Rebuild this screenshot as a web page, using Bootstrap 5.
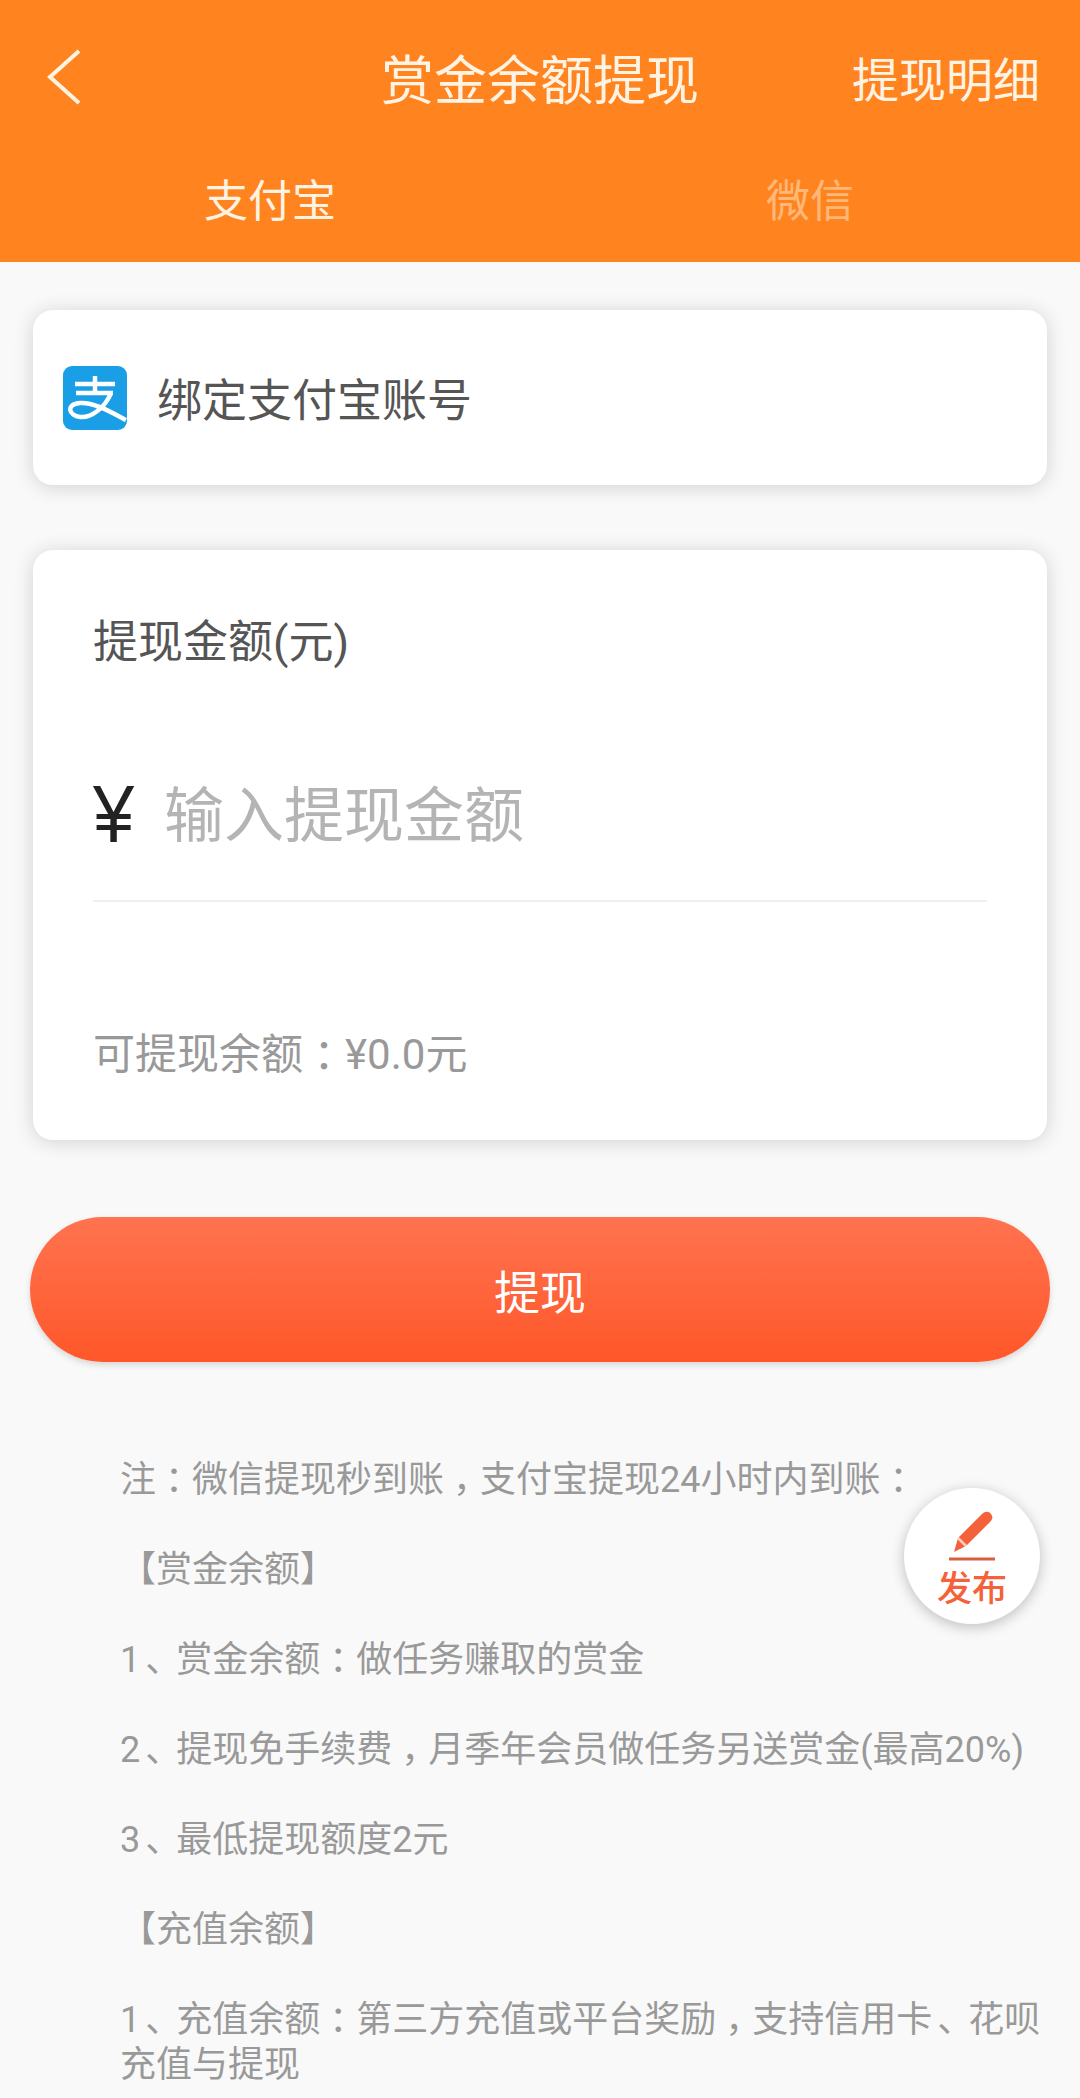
<!doctype html>
<html lang="zh"><head><meta charset="utf-8">
<link href="https://cdn.jsdelivr.net/npm/bootstrap@5.3.0/dist/css/bootstrap.min.css" rel="stylesheet">
<style>
html,body{height:2098px;overflow:hidden}
body{background:#f9f9f9;font-family:"Noto Sans CJK SC","Liberation Sans",sans-serif;position:relative;color:#555}
.top-bar{background:#ff8420;height:262px;color:#fff3e4}
.top-row{display:grid;grid-template-columns:1fr auto 1fr;align-items:center;height:80px;padding:37px 40px 0 40px;box-sizing:content-box}
.back-icon{display:block;margin-left:7px}
.page-title{font-size:53px;line-height:80px}
.top-link{font-size:47px;line-height:80px}
.tab-row{margin:0;padding-top:49px}
.tab-item{font-size:44px;line-height:64px;padding:0}
.tab-off{color:#ffb878}
.panel{margin:48px 33px 0;border:0;border-radius:20px;box-shadow:0 2px 20px rgba(0,0,0,.16);background:#fff}
.bind-panel{height:175px;flex-direction:row;align-items:center;padding-left:30px}
.bind-text{font-size:45px;margin-left:30px;color:#555}
.amount-panel{margin-top:65px;height:590px;padding:0 60px}
.amount-label{font-family:Roboto,"Noto Sans CJK SC",sans-serif;font-size:45px;line-height:60px;margin-top:63px;color:#555}
.amount-row{height:140px;margin-top:89px;border-bottom:2px solid #f0f0f0;padding-bottom:41px;display:flex;align-items:center}
.yen{font-size:74px;color:#222;width:71px;line-height:1;font-family:"Liberation Sans",sans-serif;margin-top:8px}
.yen-glyph{display:inline-block;transform:scaleY(1.1)}
.amount-hint{font-size:60px;color:#b4b4b4;line-height:80px}
.balance{font-family:Roboto,"Noto Sans CJK SC",sans-serif;font-size:42px;color:#999;line-height:60px;margin-top:123px}
.cash-btn{display:block;margin:77px 30px 0;width:1020px;height:145px;border:0;border-radius:73px;font-size:46px;color:#fff;background:linear-gradient(#ff7350,#ff5729);box-shadow:0 3px 6px rgba(0,0,0,.14)}
.cash-btn:hover,.cash-btn:active{color:#fff;background:linear-gradient(#ff7350,#ff5729)}
.notes{font-family:Roboto,"Noto Sans CJK SC",sans-serif;padding:0 32px 0 120px;margin-top:96px;font-size:36px;line-height:45px;color:#999}
.notes p{margin:0 0 45px}
.mid-punct{font-feature-settings:"halt";padding:0 .25em}
.low-punct{font-feature-settings:"halt";padding:0 .36em 0 .14em}
.fab{position:absolute;left:904px;top:1488px;width:136px;height:136px;border-radius:50%;background:#fff;box-shadow:0 3px 14px rgba(0,0,0,.24);display:flex;flex-direction:column;align-items:center;color:#f4623a}
.fab svg{margin-top:22px;display:block}
.fab-label{font-size:35px;line-height:40px;margin-top:4px;font-weight:500}
</style></head>
<body>
<div class="top-bar">
  <div class="top-row">
    <div><svg class="back-icon" width="36" height="56" viewBox="0 0 36 56"><path d="M32 2 3 28l29 26" fill="none" stroke="#fff3e4" stroke-width="4"/></svg></div>
    <div class="page-title">赏金余额提现</div>
    <div class="top-link text-end">提现明细</div>
  </div>
  <div class="row tab-row">
    <div class="col-6 text-center tab-item">支付宝</div>
    <div class="col-6 text-center tab-item tab-off">微信</div>
  </div>
</div>

<div class="card panel bind-panel">
  <svg width="64" height="64" viewBox="0 0 64 64"><rect width="64" height="64" rx="9" fill="#1a9fe6"/><g fill="none" stroke="#fff" stroke-width="4.5"><path d="M12 18h40M32 10v17M13 27h37"/><path d="M48 27C42 42 28 52 17 51 6 50 2 38 17 37 30 36 46 45 63 54"/></g></svg>
  <div class="bind-text">绑定支付宝账号</div>
</div>

<div class="card panel amount-panel">
  <div class="amount-label">提现金额(元)</div>
  <div class="amount-row"><span class="yen"><span class="yen-glyph">¥</span></span><span class="amount-hint">输入提现金额</span></div>
  <div class="balance">可提现余额<span class="mid-punct">：</span>¥0.0元</div>
</div>

<button type="button" class="btn cash-btn">提现</button>

<div class="notes">
  <p>注<span class="mid-punct">：</span>微信提现秒到账<span class="mid-punct">，</span>支付宝提现24小时内到账<span class="mid-punct">：</span></p>
  <p>【赏金余额】</p>
  <p>1<span class="low-punct">、</span>赏金余额<span class="mid-punct">：</span>做任务赚取的赏金</p>
  <p>2<span class="low-punct">、</span>提现免手续费<span class="mid-punct">，</span>月季年会员做任务另送赏金(最高20%)</p>
  <p>3<span class="low-punct">、</span>最低提现额度2元</p>
  <p>【充值余额】</p>
  <p>1<span class="low-punct">、</span>充值余额<span class="mid-punct">：</span>第三方充值或平台奖励<span class="mid-punct">，</span>支持信用卡<span class="low-punct">、</span>花呗<br>充值与提现</p>
</div>

<div class="fab">
  <svg width="48" height="52" viewBox="0 0 48 52"><path d="M6 42 10 28 34 4c3-3 7-3 9 0s2 5-1 8L18 36z" fill="#f4623a"/><path d="M10 28 18 36" stroke="#fff" stroke-width="2.5" opacity=".7"/><path d="M1 49h46" stroke="#d9603f" stroke-width="3"/></svg>
  <div class="fab-label">发布</div>
</div>
</body></html>
